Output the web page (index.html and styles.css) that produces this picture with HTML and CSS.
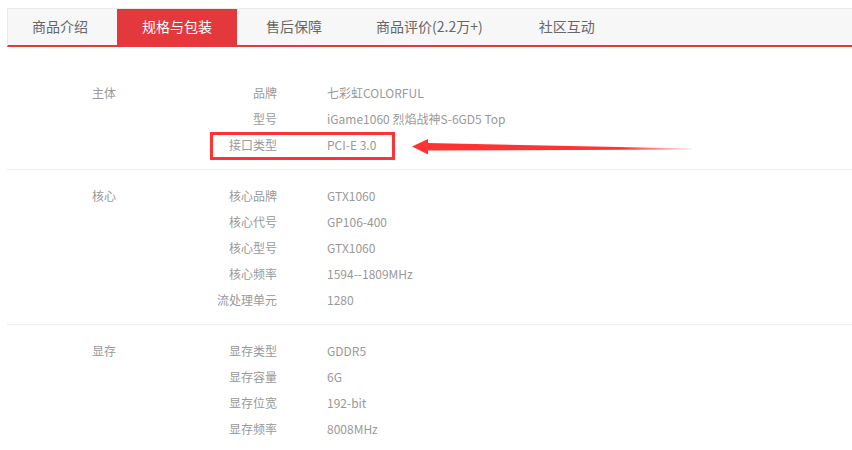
FILE: index.html
```html
<!DOCTYPE html>
<html lang="zh-CN">
<head>
<meta charset="utf-8">
<title>规格与包装</title>
<link rel="stylesheet" href="styles.css">
</head>
<body>
<div class="page">
  <ul class="tabs">
    <li class="tab">商品介绍</li>
    <li class="tab active">规格与包装</li>
    <li class="tab">售后保障</li>
    <li class="tab">商品评价(2.2万+)</li>
    <li class="tab">社区互动</li>
  </ul>

  <div class="specs">
    <div class="group">
      <div class="gname">主体</div>
      <dl class="items">
        <dt>品牌</dt><dd>七彩虹COLORFUL</dd>
        <dt>型号</dt><dd>iGame1060 烈焰战神S-6GD5 Top</dd>
        <dt>接口类型</dt><dd>PCI-E 3.0</dd>
      </dl>
    </div>
    <div class="group">
      <div class="gname">核心</div>
      <dl class="items">
        <dt>核心品牌</dt><dd>GTX1060</dd>
        <dt>核心代号</dt><dd>GP106-400</dd>
        <dt>核心型号</dt><dd>GTX1060</dd>
        <dt>核心频率</dt><dd>1594--1809MHz</dd>
        <dt>流处理单元</dt><dd>1280</dd>
      </dl>
    </div>
    <div class="group">
      <div class="gname">显存</div>
      <dl class="items">
        <dt>显存类型</dt><dd>GDDR5</dd>
        <dt>显存容量</dt><dd>6G</dd>
        <dt>显存位宽</dt><dd>192-bit</dd>
        <dt>显存频率</dt><dd>8008MHz</dd>
      </dl>
    </div>
  </div>

  <div class="highlight-box"></div>
  <svg class="arrow" width="852" height="450" viewBox="0 0 852 450" aria-hidden="true">
    <defs>
      <linearGradient id="fade" x1="412" y1="0" x2="692" y2="0" gradientUnits="userSpaceOnUse">
        <stop offset="0" stop-color="#ff3333"/>
        <stop offset="0.75" stop-color="#ff3333"/>
        <stop offset="1" stop-color="#ff3333" stop-opacity="0.15"/>
      </linearGradient>
    </defs>
    <polygon fill="url(#fade)" points="412,146.5 428,139 428,143 692,148.5 692,149.5 428,150.5 428,154.5"/>
  </svg>
</div>
</body>
</html>
```

FILE: styles.css
```css
html, body {
  margin: 0;
  padding: 0;
  background: #fff;
}

body {
  font-family: "Noto Sans CJK SC", "Microsoft YaHei", sans-serif;
  color: #999;
}

.page {
  position: relative;
  width: 852px;
  height: 450px;
  overflow: hidden;
  padding: 8px 0 0 7px;
  box-sizing: border-box;
}

.tabs {
  display: flex;
  list-style: none;
  margin: 0;
  padding: 0;
  background: #f7f7f7;
  border-top: 1px solid #eaeaea;
  border-left: 1px solid #eaeaea;
  border-bottom: 2px solid #e4393c;
  height: 36px;
}

.tab {
  padding: 0 25px 1px;
  margin-right: 4px;
  font-size: 14px;
  line-height: 34px;
  color: #666;
  white-space: nowrap;
}

.tab:first-child {
  padding-left: 24px;
}

.tab:last-child {
  padding-left: 27px;
}

.tab.active {
  background: #e4393c;
  color: #fff;
  height: 36px;
}

.specs {
  margin-top: 20px;
}

.group {
  display: flex;
  padding: 13px 0 11px;
  border-bottom: 1px solid #eeeeee;
  font-size: 12px;
  line-height: 26px;
}

.gname {
  width: 110px;
  padding-left: 85px;
  flex: none;
}

.items {
  display: grid;
  grid-template-columns: 75px 1fr;
  column-gap: 50px;
  margin: 0;
}

.items dt {
  text-align: right;
  white-space: nowrap;
}

.items dd {
  margin: 0;
  white-space: nowrap;
}

.highlight-box {
  position: absolute;
  left: 210px;
  top: 132px;
  width: 185px;
  height: 28px;
  box-sizing: border-box;
  border: 3px solid #ff3333;
}

.arrow {
  position: absolute;
  left: 0;
  top: 0;
  pointer-events: none;
}
```
